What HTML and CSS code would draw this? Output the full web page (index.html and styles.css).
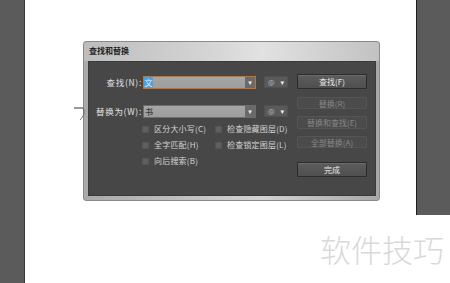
FILE: index.html
```html
<!DOCTYPE html>
<html lang="zh-CN">
  <head>
    <meta charset="UTF-8" />
    <title>查找和替换</title>
    <link rel="stylesheet" href="styles.css">
  </head>
  <body>
    <div class="page">
      <div class="rail-left"></div>

      <div class="canvas">
        <svg class="stray" width="14" height="20" viewBox="0 0 14 20">
          <path d="M1 4 H10" stroke="#333" stroke-width="1" fill="none"/>
          <path d="M10 4 C12 8 11 12 7 16" stroke="#555" stroke-width="0.8" fill="none"/>
        </svg>

        <div class="dialog">
          <div class="title">查找和替换</div>
          <div class="panel">
            <div class="form">
              <div class="row">
                <label class="label">查找(N):</label>
                <div class="field active">
                  <span class="value selected">文</span>
                  <span class="drop">▾</span>
                </div>
                <div class="at-btn"><span class="at">@</span><span class="caret">▾</span></div>
              </div>
              <div class="row row-replace">
                <label class="label">替换为(W):</label>
                <div class="field">
                  <span class="value">书</span>
                  <span class="drop">▾</span>
                </div>
                <div class="at-btn"><span class="at">@</span><span class="caret">▾</span></div>
              </div>
              <div class="options">
                <div class="check"><span class="box"></span>区分大小写(C)</div>
                <div class="check"><span class="box"></span>检查隐藏图层(D)</div>
                <div class="check"><span class="box"></span>全字匹配(H)</div>
                <div class="check"><span class="box"></span>检查锁定图层(L)</div>
                <div class="check"><span class="box"></span>向后搜索(B)</div>
              </div>
            </div>
            <div class="actions">
              <button class="btn btn-find">查找(F)</button>
              <button class="btn off btn-replace">替换(R)</button>
              <button class="btn off btn-refind">替换和查找(E)</button>
              <button class="btn off btn-all">全部替换(A)</button>
              <button class="btn btn-done">完成</button>
            </div>
          </div>
        </div>

        <div class="watermark">软件技巧</div>
      </div>

      <div class="rail-right"></div>
    </div>
  </body>
</html>
```

FILE: styles.css
```css
body {
  margin: 0;
  font-family: "Noto Sans CJK SC", "DejaVu Sans", sans-serif;
  background: #fff;
}
.page {
  display: flex;
  align-items: flex-start;
  width: 450px;
  height: 283px;
  overflow: hidden;
}
.rail-left {
  width: 24px;
  height: 283px;
  background: #5b5b5b;
  border-right: 1px solid #3a3a3a;
}
.rail-right {
  width: 33px;
  height: 215px;
  background: #5b5b5b;
  border-left: 1px solid #1e1e1e;
}
.canvas {
  position: relative;
  flex: 1;
  height: 283px;
  background: #fff;
}
.stray {
  position: absolute;
  left: 48px;
  top: 104px;
}
.watermark {
  position: absolute;
  left: 295px;
  top: 226px;
  font-size: 31px;
  font-weight: 300;
  color: #d9d9d9;
  white-space: nowrap;
}

.dialog {
  box-sizing: border-box;
  margin: 41px 0 0 58px;
  width: 297px;
  height: 160px;
  border: 1px solid #8a8a8a;
  border-radius: 3px;
  background: linear-gradient(90deg, #a9a9a9, #c4c4c4 40%, #d2d2d2 60%, #a8a8a8);
  padding: 0 3px 4px 4px;
  display: flex;
  flex-direction: column;
}
.title {
  height: 19px;
  line-height: 17px;
  font-size: 8px;
  font-weight: bold;
  color: #1d1d1d;
  background: linear-gradient(90deg, #bdbdbd, #d6d6d6 45%, #e2e2e2 60%, #c2c2c2);
  margin: 0 -3px 0 -4px;
  padding-left: 5px;
  border-radius: 3px 3px 0 0;
}
.panel {
  flex: 1;
  display: flex;
  background: #474747;
  border: 1px solid #3a3a3a;
}

.form {
  width: 208px;
  padding-top: 13px;
}
.row {
  display: flex;
  align-items: center;
  height: 14px;
}
.row-replace {
  margin-top: 15px;
}
.label {
  width: 53px;
  padding-right: 1px;
  text-align: right;
  font-size: 8.5px;
  letter-spacing: 0.7px;
  color: #e2e2e2;
  white-space: nowrap;
}
.field {
  display: flex;
  align-items: center;
  width: 113px;
  height: 13px;
  box-sizing: border-box;
  background: linear-gradient(#a6a6a6, #9d9d9d);
  border: 1px solid #6d6d6d;
}
.field.active {
  border-color: #b5773e;
  box-shadow: 0 0 0 1px #5b4230;
}
.value {
  flex: 1;
  font-size: 8px;
  line-height: 11px;
  color: #111;
  padding-left: 1px;
}
.value.selected {
  flex: none;
  width: 9px;
  margin-right: auto;
  background: #4f9fe0;
  color: #dff0ff;
  text-align: center;
  padding-left: 0;
}
.drop {
  width: 10px;
  height: 11px;
  background: #6a6a6a;
  color: #eee;
  font-size: 7px;
  line-height: 11px;
  text-align: center;
}
.at-btn {
  margin-left: 8px;
  width: 22px;
  height: 10px;
  background: #5a5a5a;
  border: 1px solid #505050;
  display: flex;
  align-items: center;
  justify-content: space-around;
  color: #ddd;
  font-size: 7px;
  line-height: 10px;
}
.at {
  color: #bbb;
}
.caret {
  color: #f0f0f0;
}

.options {
  display: grid;
  grid-template-columns: 73px 80px;
  row-gap: 4px;
  margin: 5px 0 0 53px;
}
.check {
  display: flex;
  align-items: center;
  font-size: 8px;
  line-height: 12px;
  letter-spacing: 0.2px;
  color: #d4d4d4;
  white-space: nowrap;
}
.box {
  width: 5px;
  height: 5px;
  margin-right: 5px;
  background: #5e5e5e;
  border: 1px solid #555;
}

.actions {
  display: flex;
  flex-direction: column;
  width: 70px;
  padding-top: 12px;
}
.btn {
  font-family: inherit;
  width: 70px;
  margin: 0;
  padding: 0;
  font-size: 8px;
  color: #e8e8e8;
  background: linear-gradient(#5c5c5c, #4f4f4f);
  border: 1px solid #2b2b2b;
  box-shadow: inset 0 1px 0 #6b6b6b;
  border-radius: 1px;
}
.btn.off {
  color: #888;
  background: #4b4b4b;
  border-color: #555;
  box-shadow: none;
}
.btn-find {
  height: 15px;
}
.btn-replace {
  height: 12px;
  margin-top: 8px;
}
.btn-refind {
  height: 13px;
  margin-top: 7px;
}
.btn-all {
  height: 12px;
  margin-top: 7px;
}
.btn-done {
  height: 15px;
  margin-top: 14px;
}
```
